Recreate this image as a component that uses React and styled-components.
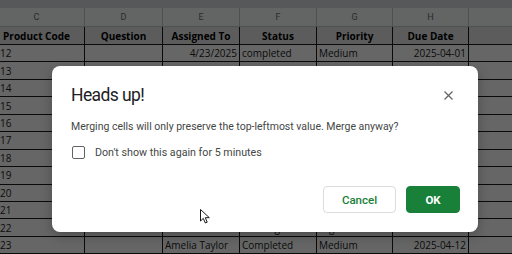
import React from 'react'
import styled, { createGlobalStyle } from 'styled-components'

const GlobalStyle = createGlobalStyle`
  html, body {
    margin: 0;
    padding: 0;
    background: #ffffff;
    overflow: hidden;
  }
`

const COLS = '96px 78px 77px 77px 76px 76px 1fr'

const letters = ['C', 'D', 'E', 'F', 'G', 'H', '']
const headers = ['Product Code', 'Question', 'Assigned To', 'Status', 'Priority', 'Due Date', '']

const rows = [
  ['12', '', '4/23/2025', 'completed', 'Medium', '2025-04-01'],
  ['13', '', '', '', '', ''],
  ['14', '', '', '', '', ''],
  ['15', '', '', '', '', ''],
  ['16', '', '', '', '', ''],
  ['17', '', '', '', '', ''],
  ['18', '', '', '', '', ''],
  ['19', '', '', '', '', ''],
  ['20', '', '', '', '', ''],
  ['21', '', '', '', '', ''],
  ['22', '', 'Ethan Moore', 'Pending', 'High', '2025-04-11'],
  ['23', '', 'Amelia Taylor', 'Completed', 'Medium', '2025-04-12'],
]

// columns whose values sit on the right of the cell (dates)
const rightAligned = (ci, value) => ci === 5 || (ci === 2 && /^\d/.test(value))

function App() {
  return (
    <Page>
      <GlobalStyle />

      <Sheet>
        <TopBand />
        <LetterRow>
          {letters.map((l, i) => (
            <LetterCell key={i}>{l}</LetterCell>
          ))}
        </LetterRow>
        <HeaderRow>
          {headers.map((h, i) => (
            <HeaderCell key={i}>{h}</HeaderCell>
          ))}
        </HeaderRow>
        {rows.map((r, ri) => (
          <DataRow key={ri}>
            {r.map((v, ci) => (
              <DataCell key={ci} $right={rightAligned(ci, v)} $first={ci === 0}>
                {v}
              </DataCell>
            ))}
            <DataCell />
          </DataRow>
        ))}
      </Sheet>

      <Overlay>
        <Dialog role="dialog" aria-labelledby="heads-up">
          <DialogHead>
            <Title id="heads-up">Heads up!</Title>
            <CloseButton aria-label="Close">
              <svg width="9" height="9" viewBox="0 0 9 9">
                <path d="M0.5 0.5 L8.5 8.5 M8.5 0.5 L0.5 8.5" stroke="#5f6368" strokeWidth="1.2" fill="none" />
              </svg>
            </CloseButton>
          </DialogHead>

          <Message>Merging cells will only preserve the top-leftmost value. Merge anyway?</Message>

          <CheckRow>
            <Box type="checkbox" />
            Don't show this again for 5 minutes
          </CheckRow>

          <Footer>
            <Button>Cancel</Button>
            <Button $primary>OK</Button>
          </Footer>
        </Dialog>
      </Overlay>

      <Cursor width="11" height="15" viewBox="0 0 11 15">
        <path d="M0.5 0.5 L0.5 12 L3.3 9.4 L5.3 14 L7.2 13.2 L5.3 8.7 L9.3 8.7 Z" fill="#ffffff" stroke="#000000" strokeWidth="0.9" strokeLinejoin="round" />
      </Cursor>
    </Page>
  )
}

export default App

const Page = styled.div`
  position: relative;
  width: 512px;
  height: 254px;
  overflow: hidden;
  font-family: "Open Sans", "Liberation Sans", sans-serif;
`

const Sheet = styled.div`
  display: flex;
  flex-direction: column;
  margin-left: -11px;
  width: 540px;
`

const TopBand = styled.div`
  height: 8px;
  background: #dadce0;
`

const LetterRow = styled.div`
  display: grid;
  grid-template-columns: ${COLS};
  height: 19px;
  background: #f8f9fa;
  border-bottom: 1px solid #c4c7c5;
  box-sizing: border-box;
`

const LetterCell = styled.div`
  display: flex;
  align-items: center;
  justify-content: center;
  border-right: 1px solid #c4c7c5;
  color: #6b6f73;
  font-family: "Roboto", "Liberation Sans", sans-serif;
  font-size: 9px;
`

const HeaderRow = styled.div`
  display: grid;
  grid-template-columns: ${COLS};
  height: 18px;
  background: #e6e6e6;
  border-bottom: 1px solid #1a1a1a;
  box-sizing: border-box;
`

const HeaderCell = styled.div`
  display: flex;
  align-items: center;
  justify-content: center;
  border-right: 1px solid #1a1a1a;
  color: #000000;
  font-weight: 700;
  font-size: 10px;
  white-space: nowrap;
  overflow: hidden;
`

const DataRow = styled.div`
  display: grid;
  grid-template-columns: ${COLS};
  height: 17.45px;
  border-bottom: 1px solid #1a1a1a;
  box-sizing: border-box;
  background: #ffffff;
`

const DataCell = styled.div`
  display: flex;
  align-items: center;
  justify-content: ${p => (p.$right ? 'flex-end' : 'flex-start')};
  padding: ${p => (p.$first ? '0 2px 0 11px' : '0 2px 0 2px')};
  border-right: 1px solid #1a1a1a;
  color: #222222;
  font-size: 10px;
  white-space: nowrap;
  overflow: hidden;
`

const Overlay = styled.div`
  position: absolute;
  inset: 0;
  background: rgba(0, 0, 0, 0.6);
  padding: 66px 0 0 52px;
  box-sizing: border-box;
`

const Dialog = styled.div`
  display: flex;
  flex-direction: column;
  width: 426px;
  height: 166px;
  box-sizing: border-box;
  padding: 16px 18px 19px 19px;
  background: #ffffff;
  border-radius: 8px;
  box-shadow: 0 4px 12px rgba(0, 0, 0, 0.25);
  font-family: "Roboto", "Liberation Sans", sans-serif;
`

const DialogHead = styled.div`
  display: flex;
  align-items: center;
  justify-content: space-between;
  height: 26px;
`

const Title = styled.h2`
  margin: 0;
  font-size: 17.5px;
  line-height: 26px;
  font-weight: 400;
  letter-spacing: -0.6px;
  color: #202124;
`

const CloseButton = styled.button`
  display: flex;
  align-items: center;
  justify-content: center;
  width: 24px;
  height: 24px;
  padding: 0;
  border: none;
  background: transparent;
`

const Message = styled.p`
  margin: 11px 0 0;
  font-size: 10.5px;
  line-height: 16px;
  color: #444746;
`

const CheckRow = styled.label`
  display: flex;
  align-items: center;
  gap: 10px;
  margin-top: 9px;
  height: 16px;
  font-size: 10.7px;
  color: #444746;
`

const Box = styled.input`
  appearance: none;
  margin: 0 0 0 1px;
  width: 13px;
  height: 13px;
  border: 1.6px solid #5f6368;
  border-radius: 2px;
  box-sizing: border-box;
`

const Footer = styled.div`
  display: flex;
  justify-content: flex-end;
  gap: 10px;
  margin-top: auto;
`

const Button = styled.button`
  height: 27px;
  padding: 0;
  width: ${p => (p.$primary ? '54px' : '73px')};
  box-sizing: border-box;
  border-radius: 4px;
  border: 1px solid ${p => (p.$primary ? '#188038' : '#dadce0')};
  background: ${p => (p.$primary ? '#188038' : '#ffffff')};
  color: ${p => (p.$primary ? '#ffffff' : '#188038')};
  font-family: "Roboto", "Liberation Sans", sans-serif;
  font-size: 11.5px;
  font-weight: ${p => (p.$primary ? 700 : 500)};
`

const Cursor = styled.svg`
  position: absolute;
  left: 200px;
  top: 209px;
`
